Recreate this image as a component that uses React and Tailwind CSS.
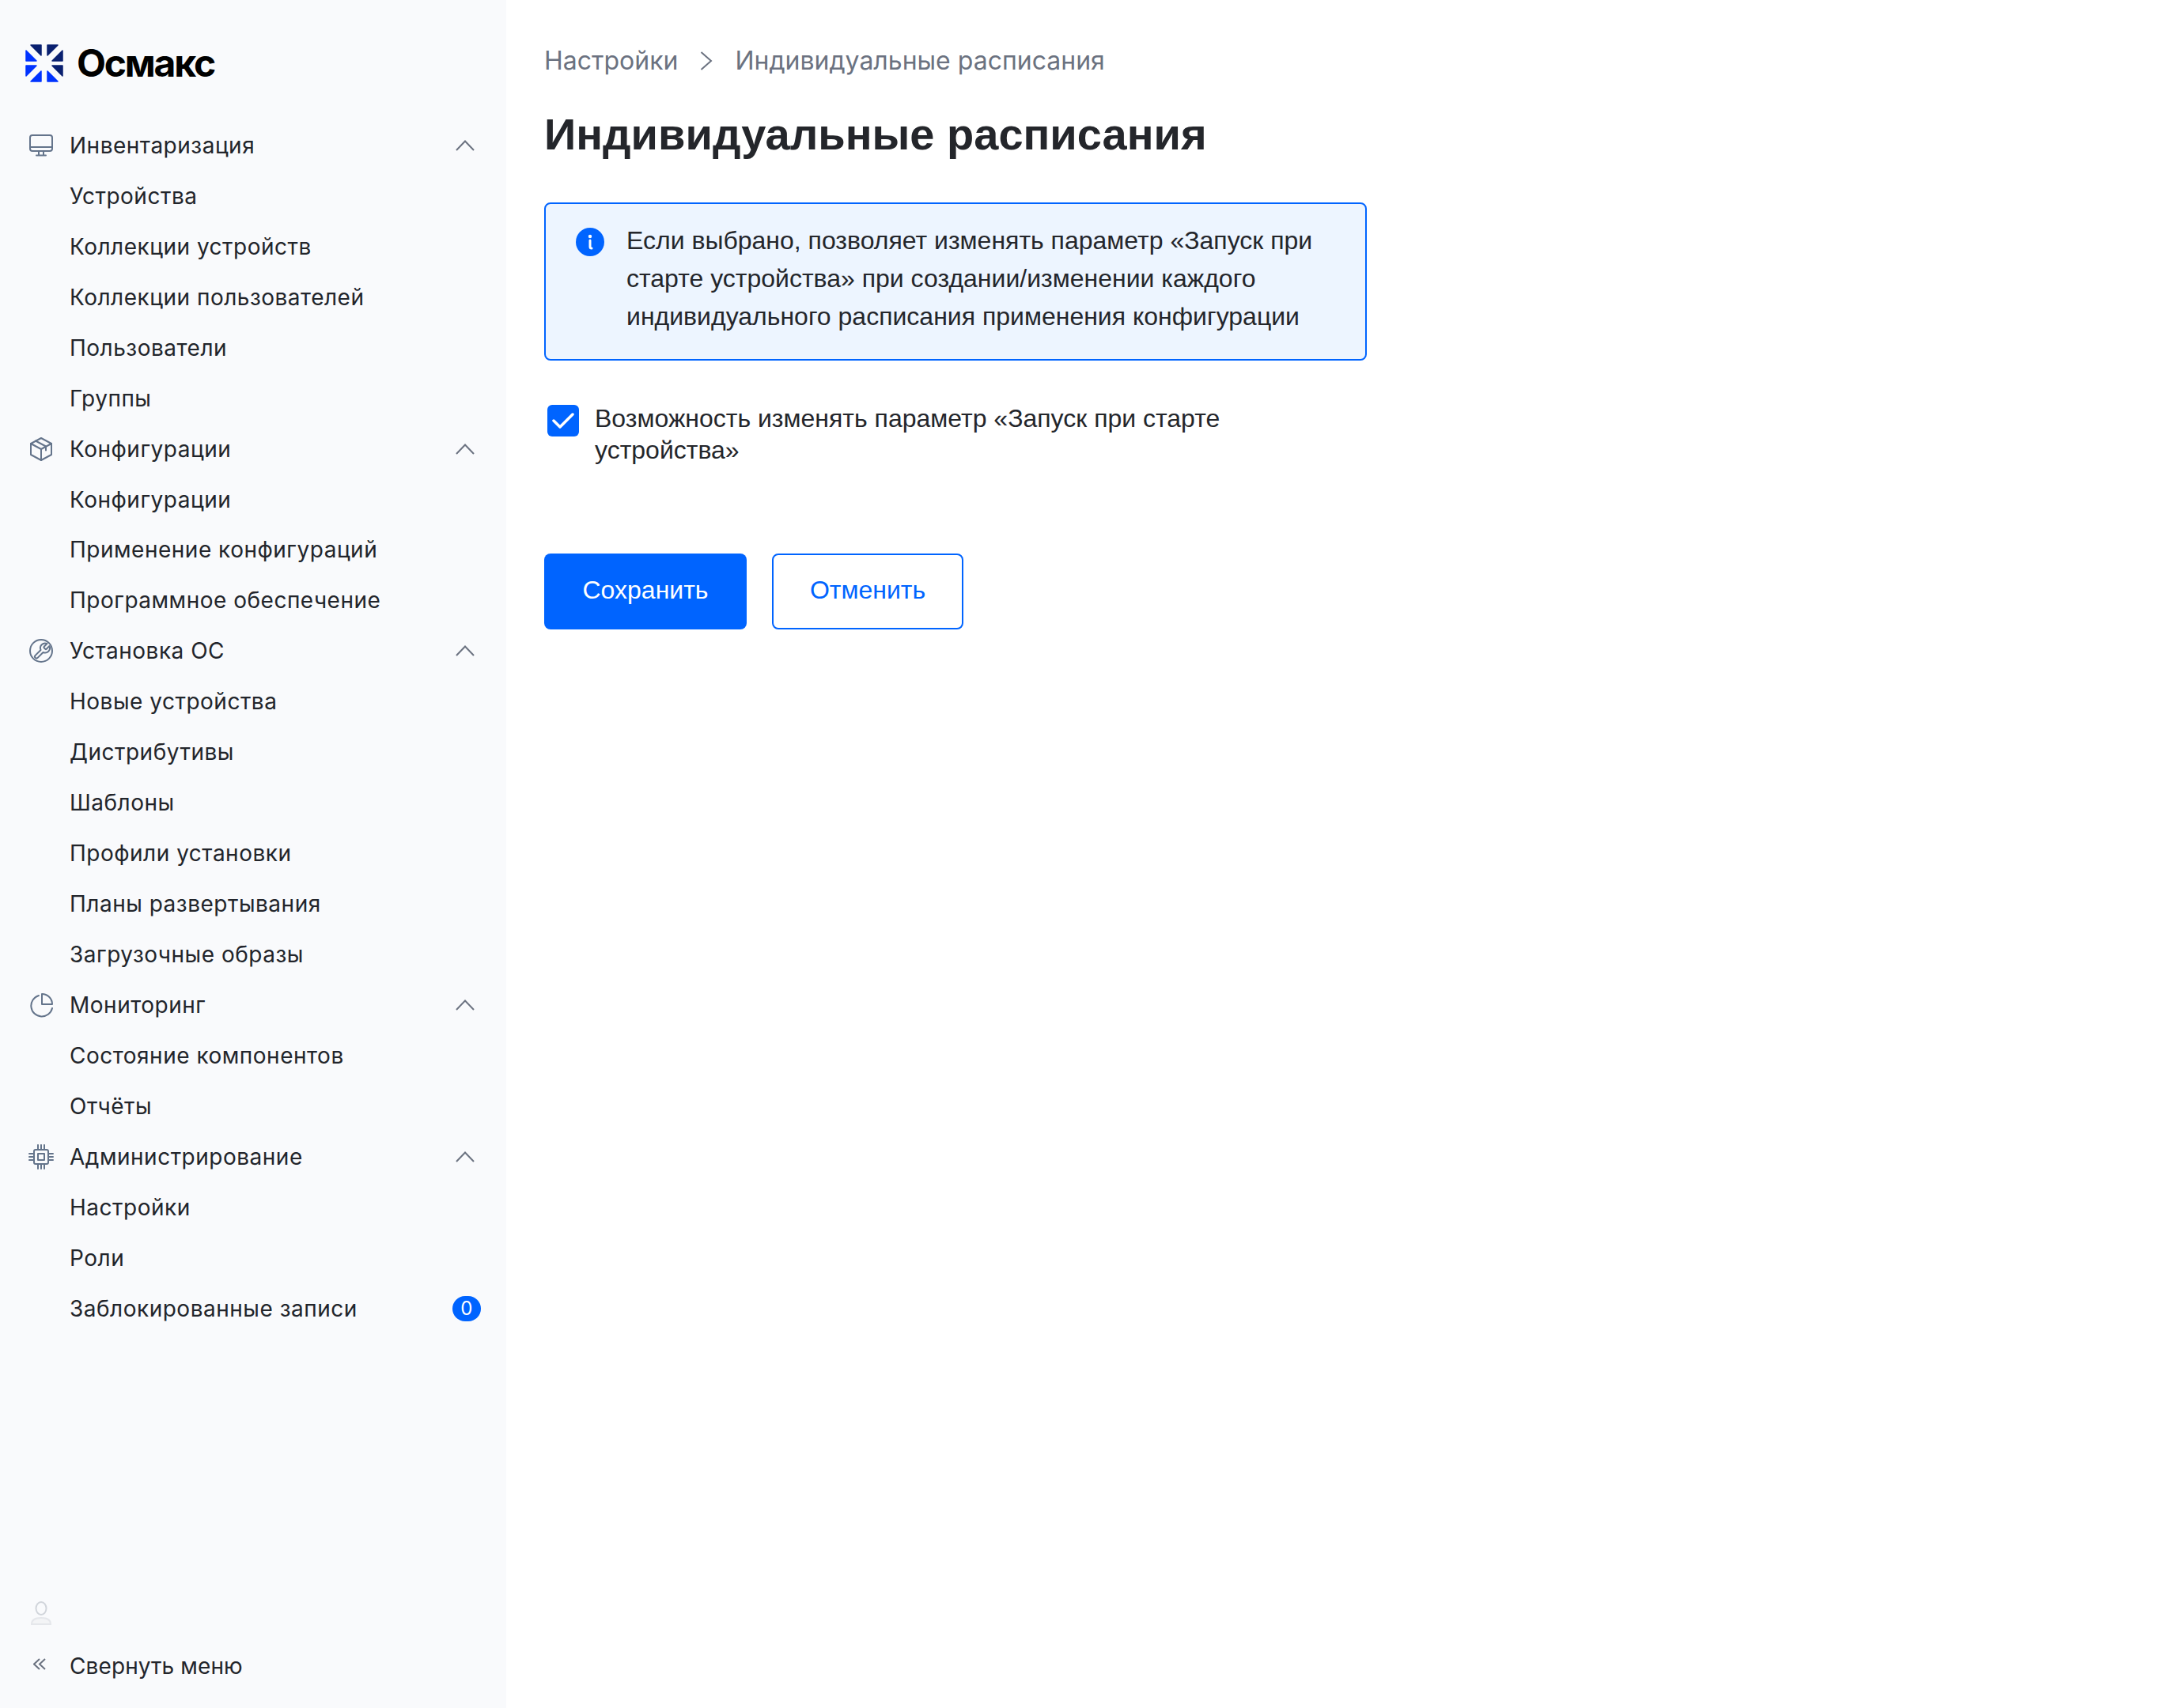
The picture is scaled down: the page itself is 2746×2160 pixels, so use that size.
const menu = [
  { title: "Инвентаризация", icon: "monitor", items: ["Устройства", "Коллекции устройств", "Коллекции пользователей", "Пользователи", "Группы"] },
  { title: "Конфигурации", icon: "box", items: ["Конфигурации", "Применение конфигураций", "Программное обеспечение"] },
  { title: "Установка ОС", icon: "wrench", items: ["Новые устройства", "Дистрибутивы", "Шаблоны", "Профили установки", "Планы развертывания", "Загрузочные образы"] },
  { title: "Мониторинг", icon: "pie", items: ["Состояние компонентов", "Отчёты"] },
  { title: "Администрирование", icon: "chip", items: ["Настройки", "Роли", "Заблокированные записи"] },
];

function MenuIcon({ name }) {
  const common = { width: 32, height: 32, viewBox: "0 0 32 32", fill: "none", stroke: "#64748b", strokeWidth: 2, strokeLinecap: "round", strokeLinejoin: "round" };
  if (name === "monitor") {
    return (
      <svg {...common}>
        <rect x="2" y="3" width="28" height="20" rx="3" />
        <path d="M2 18h28M13 23v5M19 23v5M10 28.500h12" />
      </svg>
    );
  }
  if (name === "box") {
    return (
      <svg {...common}>
        <path d="M16 2 29 9v14l-13 7-13-7V9z" />
        <path d="M3 9l13 7 13-7M16 16v14M9 5.500l13 7v5" />
      </svg>
    );
  }
  if (name === "wrench") {
    return (
      <svg {...common}>
        <circle cx="16" cy="16" r="14" />
        <path transform="translate(5 4.500)" d="M14.700 6.300a1 1 0 0 0 0 1.400l1.600 1.600a1 1 0 0 0 1.400 0l3.770-3.770a6 6 0 0 1-7.940 7.940l-6.910 6.910a2.120 2.120 0 0 1-3-3l6.910-6.910a6 6 0 0 1 7.940-7.940l-3.760 3.760z" />
      </svg>
    );
  }
  if (name === "pie") {
    return (
      <svg {...common}>
        <path d="M13 4A13.500 13.500 0 1 0 30 20" />
        <path d="M17 2v13h13A13 13 0 0 0 17 2z" />
      </svg>
    );
  }
  return (
    <svg {...common}>
      <rect x="7" y="7" width="18" height="18" rx="2" />
      <rect x="12" y="12" width="8" height="8" />
      <path d="M12 1v6M16 1v6M20 1v6M12 25v6M16 25v6M20 25v6M1 12h6M1 16h6M1 20h6M25 12h6M25 16h6M25 20h6" />
    </svg>
  );
}

function Logo() {
  return (
    <svg className="shrink-0" width="48" height="48" viewBox="0 0 48 48" strokeWidth="1.500" strokeLinejoin="round">
      <g fill="#0a2070" stroke="#0a2070">
        <path d="M7 1h13v13z" />
        <path d="M41 1H28v13z" />
        <path d="M47 8v13H34z" />
        <path d="M47 40V27H34z" />
      </g>
      <g fill="#0033ff" stroke="#0033ff">
        <path d="M1 8v13h13z" />
        <path d="M1 40V27h13z" />
        <path d="M7 47h13V34z" />
        <path d="M41 47H28V34z" />
      </g>
    </svg>
  );
}

function Row({ children, badge }) {
  return (
    <div className="h-[63.950px] pl-[88px] pr-8 flex items-center justify-between text-[28px] tracking-[0.5px] text-[#22252b]">
      <span>{children}</span>
      {badge}
    </div>
  );
}

function Sidebar() {
  return (
    <aside className="w-[640px] h-[2160px] shrink-0 bg-[#f9fafc] flex flex-col font-['Inter',sans-serif]">
      <div className="flex items-start gap-[17px] pl-8 pt-[56px] h-[152px]">
        <Logo />
        <span className="text-[48px] font-bold leading-[48px] tracking-[-2.200px] text-black">Осмакс</span>
      </div>
      <nav>
        {menu.map((group) => (
          <div key={group.title}>
            <div className="h-[63.950px] pl-9 pr-10 flex items-center gap-5 text-[28px] tracking-[0.5px] text-[#22252b]">
              <MenuIcon name={group.icon} />
              <span className="flex-1">{group.title}</span>
              <svg width="24" height="14" viewBox="0 0 24 14" fill="none" stroke="#6b7280" strokeWidth="2">
                <path d="M1 13 12 1.500 23 13" />
              </svg>
            </div>
            {group.items.map((item) => (
              <Row
                key={item}
                badge={
                  item === "Заблокированные записи" ? (
                    <span className="w-9 h-8 rounded-full bg-[#0064ff] text-white text-[24px] flex items-center justify-center">0</span>
                  ) : null
                }
              >
                {item}
              </Row>
            ))}
          </div>
        ))}
      </nav>
      <div className="mt-auto pb-[29px]">
        <div className="pl-[39px] mb-[28px]">
          <svg className="block" width="26" height="30" viewBox="0 0 26 30" fill="none" stroke="#d1d5db" strokeWidth="2">
            <ellipse cx="13" cy="9" rx="6.500" ry="8" />
            <path d="M1 29c0-6 5-8 12-8s12 2 12 8z" stroke="#e5e7eb" fill="#f3f4f6" />
          </svg>
        </div>
        <div className="h-12 pl-[42px] flex items-center gap-[30px] text-[28px] tracking-[0.1px] text-[#22252b]">
          <svg className="-mt-[5px]" width="16" height="16" viewBox="0 0 16 16" fill="none" stroke="#6b7280" strokeWidth="2">
            <path d="M8 1 1 7.500 8 14M15 1 8 7.500l7 6.500" />
          </svg>
          <span>Свернуть меню</span>
        </div>
      </div>
    </aside>
  );
}

export default function App() {
  return (
    <div className="flex min-h-[2160px] bg-white">
      <Sidebar />
      <main className="flex-1 pl-12 pt-[53px] font-['Liberation_Sans',sans-serif] text-[#24262b]">
        <div className="flex items-center gap-[28px] h-12 text-[32px] text-[#6b7280] font-['Inter',sans-serif]">
          <span>Настройки</span>
          <svg width="16" height="24" viewBox="0 0 16 24" fill="none" stroke="#6b7280" strokeWidth="2">
            <path d="M1.500 1 14 12 1.500 23" />
          </svg>
          <span>Индивидуальные расписания</span>
        </div>
        <h1 className="mt-[33px] text-[56px] leading-[72px] font-bold text-[#24262b]">Индивидуальные расписания</h1>
        <div className="mt-[50px] w-[1040px] h-[200px] rounded-lg border-2 border-[#0064ff] bg-[#edf5ff] flex pl-[38px] pt-[22px] gap-[28px]">
          <svg className="mt-[8px] shrink-0" width="36" height="36" viewBox="0 0 36 36">
            <circle cx="18" cy="18" r="18" fill="#0064ff" />
            <circle cx="18" cy="11" r="2.200" fill="#fff" />
            <path d="M18 16v8c0 1.500.7 2 2 2" fill="none" stroke="#fff" strokeWidth="3" strokeLinecap="round" />
          </svg>
          <p className="text-[32px] leading-[48px] w-[900px]">
            Если выбрано, позволяет изменять параметр «Запуск при старте устройства» при создании/изменении каждого индивидуального расписания применения конфигурации
          </p>
        </div>
        <div className="mt-[53px] flex gap-5 pl-1">
          <div className="mt-[3px] w-10 h-10 rounded-md bg-[#0064ff] flex items-center justify-center shrink-0">
            <svg width="28" height="22" viewBox="0 0 28 22" fill="none" stroke="#fff" strokeWidth="3.500" strokeLinecap="round" strokeLinejoin="round">
              <path d="M2 11l8 8L26 3" />
            </svg>
          </div>
          <p className="text-[32px] leading-[40px] w-[860px]">Возможность изменять параметр «Запуск при старте устройства»</p>
        </div>
        <div className="mt-[111px] flex gap-8">
          <button className="w-[256px] h-24 pb-1 rounded-lg bg-[#0064ff] text-white text-[32px]">Сохранить</button>
          <button className="w-[242px] h-24 pb-1 rounded-lg border-2 border-[#0064ff] bg-white text-[#0064ff] text-[32px]">Отменить</button>
        </div>
      </main>
    </div>
  );
}
